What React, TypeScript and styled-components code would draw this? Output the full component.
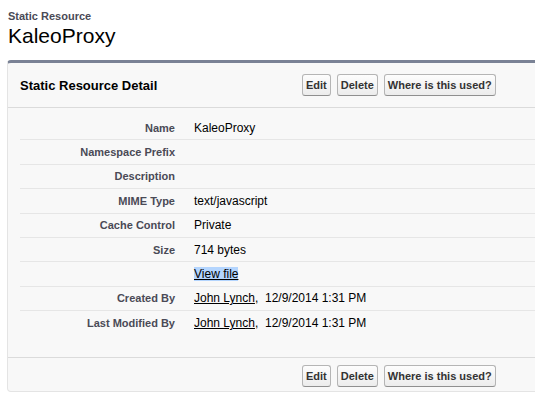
import styled, { createGlobalStyle } from 'styled-components';

const GlobalStyle = createGlobalStyle`
  html, body {
    margin: 0;
    padding: 0;
    background: #ffffff;
    overflow: hidden;
  }
  body {
    font-family: 'Liberation Sans', Arial, Helvetica, sans-serif;
    color: #000;
  }
`;

interface Field {
  label: string;
  value?: string;
  kind?: 'text' | 'selectedLink' | 'user';
  date?: string;
}

const FIELDS: Field[] = [
  { label: 'Name', value: 'KaleoProxy' },
  { label: 'Namespace Prefix' },
  { label: 'Description' },
  { label: 'MIME Type', value: 'text/javascript' },
  { label: 'Cache Control', value: 'Private' },
  { label: 'Size', value: '714 bytes' },
  { label: '', value: 'View file', kind: 'selectedLink' },
  { label: 'Created By', value: 'John Lynch', kind: 'user', date: '12/9/2014 1:31 PM' },
  { label: 'Last Modified By', value: 'John Lynch', kind: 'user', date: '12/9/2014 1:31 PM' },
];

const ACTIONS = ['Edit', 'Delete', 'Where is this used?'];

function ButtonBar() {
  return (
    <Buttons>
      {ACTIONS.map((a) => (
        <Btn key={a} type="button">
          {a}
        </Btn>
      ))}
    </Buttons>
  );
}

function FieldValue({ field }: { field: Field }) {
  if (field.kind === 'selectedLink') {
    return (
      <Selected>
        <Link href="#">{field.value}</Link>
      </Selected>
    );
  }
  if (field.kind === 'user') {
    return (
      <>
        <Link href="#">{field.value}</Link>,{'\u00a0\u00a0'}
        {field.date}
      </>
    );
  }
  return <>{field.value ?? ''}</>;
}

export default function App() {
  return (
    <Page>
      <GlobalStyle />
      <PageTitle>
        <TypeName>Static Resource</TypeName>
        <RecordName>KaleoProxy</RecordName>
      </PageTitle>

      <Card>
        <Header>
          <CardTitle>Static Resource Detail</CardTitle>
          <ButtonBar />
        </Header>

        <Body>
          {FIELDS.map((f, i) => (
            <Row key={i} $last={i === FIELDS.length - 1}>
              <Label>{f.label}</Label>
              <Value>
                <FieldValue field={f} />
              </Value>
            </Row>
          ))}
        </Body>

        <Footer>
          <ButtonBar />
        </Footer>
      </Card>
    </Page>
  );
}

/* ---- styled ---- */

const Page = styled.div`
  padding: 10px 0 0 7px;
`;

const PageTitle = styled.div`
  padding-left: 1px;
  height: 50px;
`;

const TypeName = styled.div`
  font-size: 11px;
  line-height: 13px;
  font-weight: 700;
  color: #4a4a56;
`;

const RecordName = styled.h1`
  margin: 0;
  font-size: 21px;
  line-height: 25px;
  font-weight: 400;
  color: #000;
`;

const Card = styled.div`
  width: 600px;
  background: #f8f8f8;
  border: 1px solid #e4e4e4;
  border-top: 3px solid #7a8295;
  border-radius: 4px;
`;

const Header = styled.div`
  display: grid;
  grid-template-columns: 282px 1fr;
  align-items: center;
  height: 44px;
  padding-left: 12px;
  border-bottom: 1px solid #dbdbdb;
`;

const CardTitle = styled.h2`
  margin: 0;
  font-size: 13px;
  font-weight: 700;
  color: #000;
`;

const Buttons = styled.div`
  display: flex;
  gap: 6px;
`;

const Btn = styled.button`
  height: 22px;
  padding: 0 3px;
  font-family: 'Liberation Sans', Arial, Helvetica, sans-serif;
  font-size: 11px;
  font-weight: 700;
  color: #333;
  background: linear-gradient(#fdfdfd, #ececec);
  border: 1px solid #b5b5b5;
  border-bottom-color: #8f8f8f;
  border-radius: 3px;
  cursor: pointer;
`;

const Body = styled.div`
  padding: 8px 12px 21px;
`;

const Row = styled.div<{ $last: boolean }>`
  display: grid;
  grid-template-columns: 165px 1fr;
  align-items: center;
  box-sizing: border-box;
  height: 24.4px;
  border-bottom: ${(p) => (p.$last ? 'none' : '1px solid #e6e6e6')};
`;

const Label = styled.div`
  padding-right: 10px;
  text-align: right;
  font-size: 11px;
  font-weight: 700;
  color: #4a4a56;
`;

const Value = styled.div`
  padding-left: 9px;
  font-size: 12px;
  color: #000;
  white-space: nowrap;
`;

const Link = styled.a`
  color: #000;
  text-decoration: underline;
`;

const Selected = styled.span`
  background: #b4d5fe;
`;

const Footer = styled.div`
  padding: 7px 0 4px 294px;
  border-top: 1px solid #dbdbdb;
`;
